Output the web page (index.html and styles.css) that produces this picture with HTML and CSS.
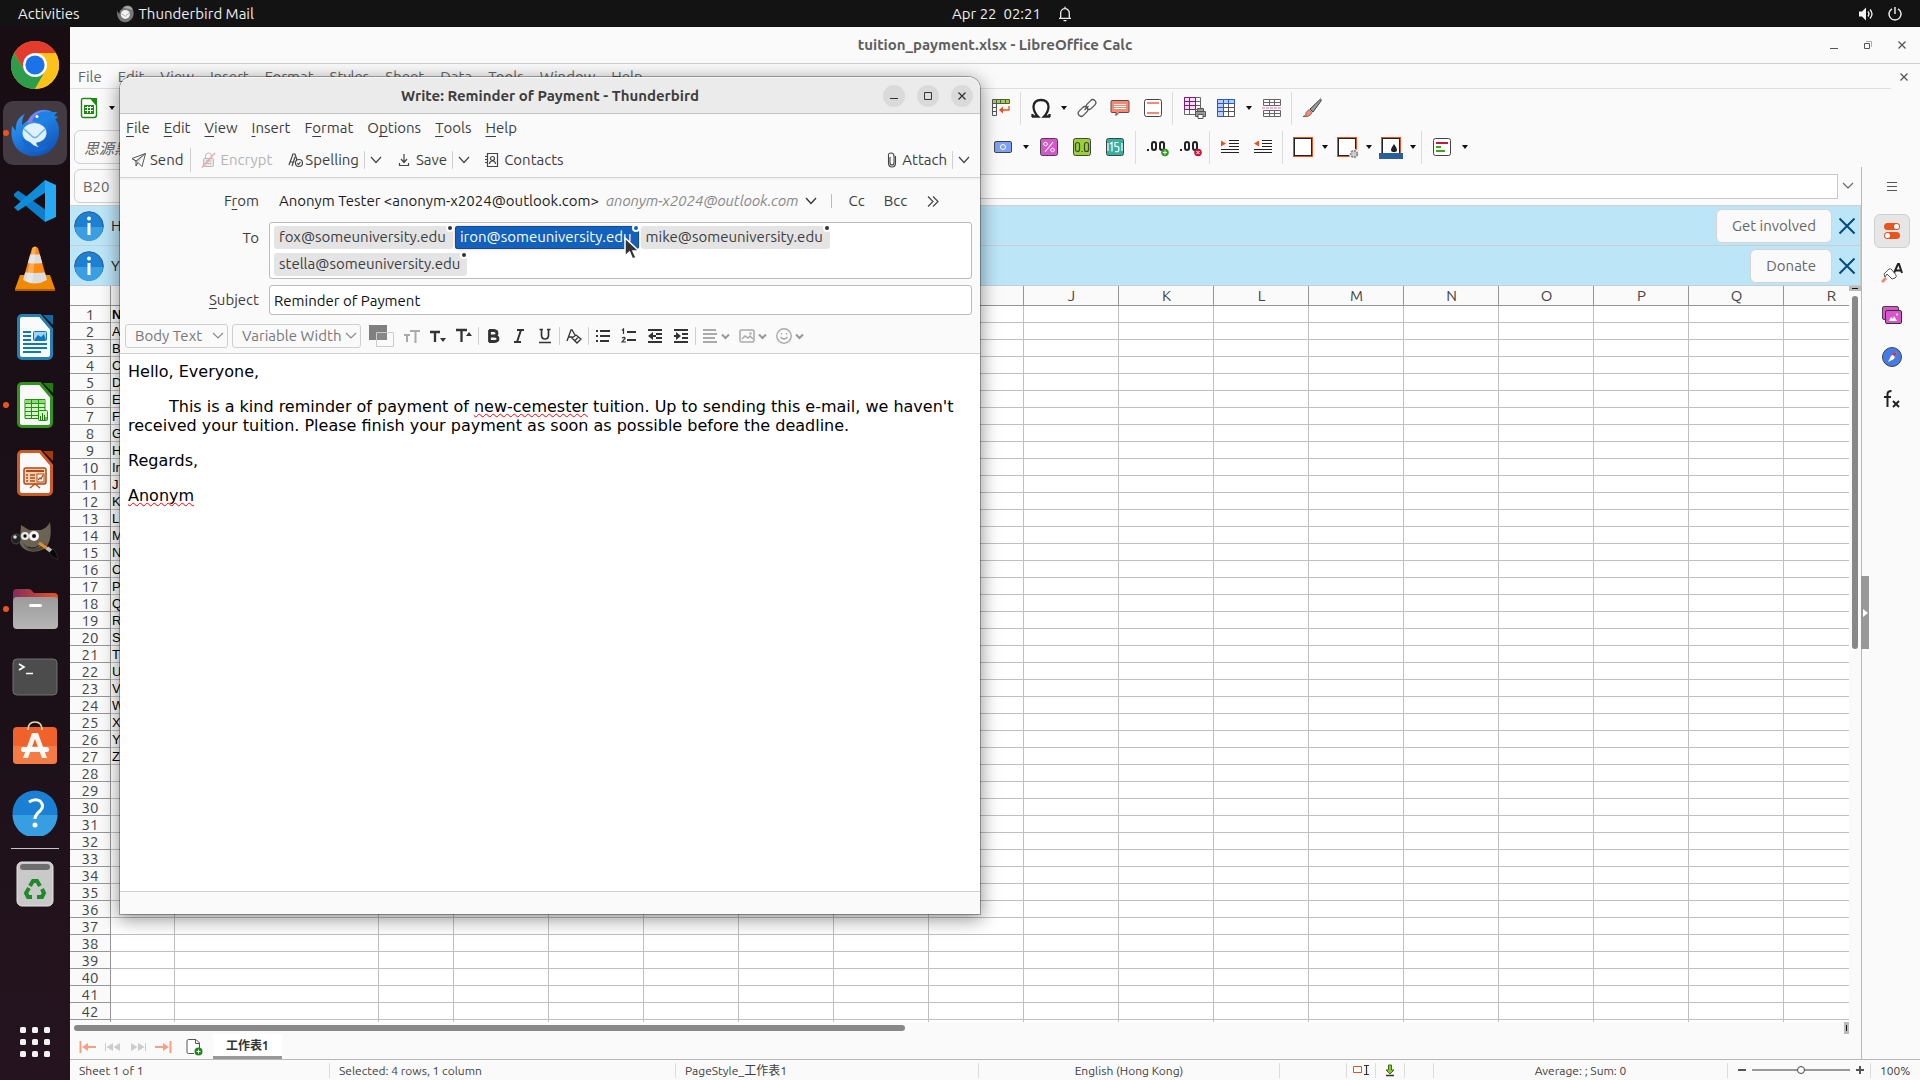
FILE: index.html
```html
<!DOCTYPE html>
<html lang="en">
<head>
<meta charset="utf-8">
<title>Write: Reminder of Payment - Thunderbird</title>
<link rel="stylesheet" href="styles.css">
</head>
<body class="desktop">
<header class="topbar">
  <div class="topbar-left">
    <button class="topbar-item">Activities</button>
    <button class="topbar-item topbar-app">
      <svg width="18" height="18" viewBox="0 0 48 48"><path d="M3 14C1 30 8 46 25 46 40 45 48 32 47 20 46 12 44 7 40 4 32-1 21 1 17 10 10 13 9 20 9 24 5 21 4 17 3 14Z" fill="#777"/><path d="M20 8C28 0 42 2 44 14L34 10Z" fill="#aaa"/><circle cx="25" cy="25" r="12" fill="#f2f2f2"/><path d="M14 23l11 7 10-9" fill="none" stroke="#999" stroke-width="2"/></svg>
      Thunderbird Mail</button>
  </div>
  <button class="topbar-item topbar-clock">Apr 22&nbsp; 02:21
    <svg width="14" height="16" viewBox="0 0 14 16" fill="none" stroke="#eee" stroke-width="1.3"><path d="M1 12.3h12M2.7 12V7a4.3 4.3 0 0 1 8.6 0v5M7 2.7V.8M5.5 14.6h3"/></svg></button>
  <div class="topbar-right">
    <svg width="16" height="14" viewBox="0 0 16 14"><path d="M0 4.500h3L7 .5v13L3 9.500H0z" fill="#f2f2f2"/><path d="M9 4.500q2 2.500 0 5M11 2.500q4 4.500 0 9" fill="none" stroke="#f2f2f2" stroke-width="1.300"/></svg>
    <svg width="14" height="14" viewBox="0 0 14 14" fill="none" stroke="#f2f2f2" stroke-width="1.400"><path d="M4 1.800a6 6 0 1 0 6 0M7 0v7"/></svg>
  </div>
</header>

<main class="screen">
<nav class="dock" aria-label="Dock">
  <button class="dock-item" aria-label="Chrome"><svg width="48" height="48" viewBox="0 0 48 48"><circle cx="24" cy="24" r="24" fill="#fbbc04"/><path d="M24 12h20.800A24 24 0 0 0 3.200 12L13.600 30z" fill="#e33b2e"/><path d="M3.200 12A24 24 0 0 0 24 48l10.400-18L24 24 13.600 30z" fill="#2d9d4b"/><path d="M34.400 30L24 48A24 24 0 0 0 44.800 12H24z" fill="#fcc21b"/><circle cx="24" cy="24" r="12" fill="#fff"/><circle cx="24" cy="24" r="9.600" fill="#1a73e8"/></svg></button>
  <button class="dock-item is-active is-running" aria-label="Thunderbird"><svg width="50" height="48" viewBox="0 0 50 48"><defs><linearGradient id="tb" x1="0" y1="0" x2=".6" y2="1"><stop offset="0" stop-color="#3ea2f5"/><stop offset=".5" stop-color="#1f7fe3"/><stop offset="1" stop-color="#1257b8"/></linearGradient></defs><path d="M2 17C-1 35 9 47 25 47 40 47 49 35 49 22 49 17 48 13 45 10L48 8 44 7 47 3 42 3C36-1 24 0 18 11 16 13 14 14 12 16 12 11 13 7 15 5 8 8 5 15 6 22z" fill="url(#tb)"/><path d="M17 14C22 3 32-1 42 3 33 3 29 8 26 14 22 13 20 14 17 14z" fill="#8c7cf0"/><path d="M22 12C26 3 34 1 42 3L47 3 44 7 48 8 44 11C38 7 31 8 28 14z" fill="#1f80e6"/><circle cx="27" cy="7.500" r="1.500" fill="#fff"/><path d="M12 30q4 11 15 13 9-1 12-8-6 5-14 3z" fill="#1568cf"/><ellipse cx="24.500" cy="24" rx="12" ry="10" fill="#dff0ff"/><path d="M19 31q3 6 10 7-3-2-3-5z" fill="#dff0ff"/><path d="M14 20l9 8q2 1 4 0l8-8" fill="none" stroke="#6fb3ef" stroke-width="1.500"/></svg></button>
  <button class="dock-item" aria-label="Code"><svg width="42" height="42" viewBox="0 0 42 42"><path d="M4 10.500L0 14v2l31 26 1-12z" fill="#0d7fca"/><path d="M4 31L0 27.500 31 0l1 12z" fill="#108cd8"/><path d="M31 0l11 5v32l-11 5z" fill="#27a9f3"/></svg></button>
  <button class="dock-item" aria-label="VLC"><svg width="40" height="46" viewBox="0 0 40 46"><defs><clipPath id="cone"><path d="M17 2q3-3 6 0l9 32q-12 7-24 0z"/></clipPath></defs><path d="M5 29h30l5 14v2H0v-2z" fill="#f08a00"/><path d="M0 43h40v2H0z" fill="#b95b00"/><g clip-path="url(#cone)"><path d="M0 0h40v40H0z" fill="#ff8a12"/><path d="M0 6q20 5 40 0v9q-20 5-40 0zM0 25q20 4 40 0v16H0z" fill="#dcdcdc"/><path d="M18 0h3l-4 40h-7z" fill="#fff" opacity=".3"/></g></svg></button>
  <button class="dock-item" aria-label="Writer"><svg width="36" height="46" viewBox="0 0 36 46"><path d="M5 1.500h18L34.500 15v26a3.500 3.500 0 0 1-3.500 3.500H5A3.500 3.500 0 0 1 1.500 41V5A3.500 3.500 0 0 1 5 1.500z" fill="#fafafa" stroke="#2181b7" stroke-width="3"/><path d="M26 1h10v10z" fill="#116ba0"/><path d="M6 18h8M6 22h8M6 26h8M6 30h24M6 34h24M6 38h18" stroke="#1177bd" stroke-width="2"/><rect x="16.500" y="17.500" width="13" height="9" rx="1" fill="#9bd3f3" stroke="#1177bd"/><path d="M17 26l4-5 3 2 3-3 2 6z" fill="#1177bd"/></svg></button>
  <button class="dock-item is-running" aria-label="Calc"><svg width="36" height="46" viewBox="0 0 36 46"><path d="M5 1.500h18L34.500 15v26a3.500 3.500 0 0 1-3.500 3.500H5A3.500 3.500 0 0 1 1.500 41V5A3.500 3.500 0 0 1 5 1.500z" fill="#fafafa" stroke="#2f961b" stroke-width="3"/><path d="M26 1h10v10z" fill="#1f7d0f"/><path d="M8 17.500h20v19H8z" fill="#d0f4c2" stroke="#278e15"/><path d="M8 18h20v3H8z" fill="#8bdc71"/><path d="M8 21.500h20M8 25.500h20M8 29.500h20M8 33.500h20M14.500 17v19M21.500 17v19" stroke="#278e15"/><rect x="21.500" y="28.500" width="9" height="10" rx="1" fill="#d0f4c2" stroke="#278e15"/><path d="M23.500 38v-4M25.500 38v-7M27.500 38v-5M29 38v-3" stroke="#1f7d0f"/></svg></button>
  <button class="dock-item" aria-label="Impress"><svg width="36" height="46" viewBox="0 0 36 46"><path d="M5 1.500h18L34.500 15v26a3.500 3.500 0 0 1-3.500 3.500H5A3.500 3.500 0 0 1 1.500 41V5A3.500 3.500 0 0 1 5 1.500z" fill="#fafafa" stroke="#cf5a23" stroke-width="3"/><path d="M26 1h10v10z" fill="#a33c09"/><rect x="7" y="18" width="22" height="16" rx="2" fill="#f9d0b6" stroke="#b04a14" stroke-width="1.500"/><path d="M9 21h18" stroke="#b04a14" stroke-width="2"/><path d="M9 25h2M9 28h2M9 31h2M13 25h5M13 28h5M13 31h5" stroke="#b04a14" stroke-width="1.500"/><rect x="20" y="24" width="7" height="8" fill="#fff" stroke="#b04a14"/><path d="M21 30l2-2 1 1 2-4M18 34l-5 4M18 34l5 4" fill="none" stroke="#b04a14" stroke-width="1.300"/></svg></button>
  <button class="dock-item" aria-label="GIMP"><svg width="48" height="40" viewBox="0 0 48 40"><path d="M10 4l8 5h12Q37 6 39 1q3 20-6 27-10 5-18 1-8-4-6-12z" fill="#6b6455"/><path d="M12 22q10 10 24 0-5 9-14 8-7-1-10-8z" fill="#4c463b"/><circle cx="5" cy="18" r="5" fill="#222" stroke="#777" stroke-width=".5"/><circle cx="4" cy="16" r="1.800" fill="#ddd"/><circle cx="14" cy="15" r="4" fill="#e8e8e8"/><circle cx="23" cy="15" r="5" fill="#f5f5f5"/><circle cx="14" cy="15" r="1.700" fill="#111"/><circle cx="23" cy="15" r="2" fill="#111"/><path d="M17 26q8 3 13-4" stroke="#222" fill="none"/><path d="M28 22l9 6" stroke="#e09030" stroke-width="3"/><path d="M36 27l4 3" stroke="#bbb" stroke-width="4"/><path d="M38 32l4-4q4 3 5 11-5-2-9-7z" fill="#080808" stroke="#444" stroke-width=".5"/></svg></button>
  <button class="dock-item is-running" aria-label="Files"><svg width="46" height="42" viewBox="0 0 46 42"><defs><linearGradient id="fo"><stop offset="0" stop-color="#862c5c"/><stop offset="1" stop-color="#e95420"/></linearGradient><linearGradient id="fg" x1="0" y1="0" x2="0" y2="1"><stop offset="0" stop-color="#9b9b9b"/><stop offset="1" stop-color="#b6b6b6"/></linearGradient></defs><path d="M1 20V5q0-4 4-4h12q2 0 4 3l1 1h20q4 0 4 4v11z" fill="url(#fo)"/><rect x="1" y="9" width="45" height="32" rx="4" fill="url(#fg)"/><rect x="17" y="16" width="13" height="3" rx="1.500" fill="#fff"/></svg></button>
  <button class="dock-item" aria-label="Terminal"><svg width="46" height="38" viewBox="0 0 46 38"><rect x="1" y="1" width="44" height="36" rx="4" fill="#4c4c4c" stroke="#707070"/><path d="M7 6l5 3-5 3M14 15.500h7" fill="none" stroke="#fff" stroke-width="1.600"/></svg></button>
  <button class="dock-item" aria-label="Software"><svg width="46" height="52" viewBox="0 0 46 52"><rect x="1" y="8" width="44" height="37" rx="4" fill="#f0622b"/><path d="M1 27h44v14q0 4-4 4H5q-4 0-4-4z" fill="#f57b45"/><path d="M16 11q0-8 7-8t7 8" fill="none" stroke="#efd9ad" stroke-width="1.600"/><path d="M20 14h6l9 25h-5L23 20l-7 19h-5z" fill="#fff" opacity=".93"/><rect x="9" y="28" width="28" height="5" rx="2.500" fill="#fff"/></svg></button>
  <button class="dock-item" aria-label="Help"><svg width="46" height="46" viewBox="0 0 46 46"><circle cx="23" cy="23" r="22.500" fill="#1b80d4"/><path d="M.5 25h45a22.500 22.500 0 0 1-45 0z" fill="#389ee2"/><path d="M17 12q6-4 11-1 5 5 0 10-5 4-5 8" fill="none" stroke="#fff" stroke-width="3"/><circle cx="23" cy="35" r="2.500" fill="#fff"/></svg></button>
  <div class="dock-separator"></div>
  <button class="dock-item" aria-label="Trash"><svg width="38" height="46" viewBox="0 0 38 46"><rect x="1" y="1" width="36" height="44" rx="5" fill="#c9c9c9" stroke="#e4e4e4"/><rect x="4" y="3" width="30" height="6" rx="3" fill="#6e6e6e"/><g fill="none" stroke="#1f8a2b" stroke-width="4"><path d="M14 25l3-5h4l3 5M26 28l2 4-2 4h-5M16 36h-4l-2-4 3-5"/></g></svg></button>
  <button class="dock-item dock-apps" aria-label="Show applications"><svg width="32" height="32" viewBox="0 0 32 32" fill="#f2f2f2"><rect x="1" y="1" width="6" height="6" rx="1.500"/><rect x="13" y="1" width="6" height="6" rx="1.500"/><rect x="25" y="1" width="6" height="6" rx="1.500"/><rect x="1" y="13" width="6" height="6" rx="1.500"/><rect x="13" y="13" width="6" height="6" rx="1.500"/><rect x="25" y="13" width="6" height="6" rx="1.500"/><rect x="1" y="25" width="6" height="6" rx="1.500"/><rect x="13" y="25" width="6" height="6" rx="1.500"/><rect x="25" y="25" width="6" height="6" rx="1.500"/></svg></button>
</nav>

<section class="calc">
  <header class="calc-title">
    <h1 class="calc-title-text">tuition_payment.xlsx - LibreOffice Calc</h1>
    <div class="calc-controls">
      <button class="calc-control" aria-label="Minimize"><svg width="10" height="10" viewBox="0 0 10 10"><path d="M1 8.500h8" stroke="#555"/></svg></button>
      <button class="calc-control" aria-label="Restore"><svg width="10" height="10" viewBox="0 0 10 10" fill="none"><path d="M1.500 3.500h5v5h-5z" stroke="#555"/><path d="M3 1.500h5.500V7" stroke="#aaa"/></svg></button>
      <button class="calc-control" aria-label="Close"><svg width="10" height="10" viewBox="0 0 10 10"><path d="M1.500 1.500l7 7m0-7l-7 7" stroke="#555" stroke-width="1.300"/></svg></button>
    </div>
  </header>
  <nav class="calc-menu">
    <div class="calc-menu-list">
      <button>File</button><button>Edit</button><button>View</button><button>Insert</button><button>Format</button><button>Styles</button><button>Sheet</button><button>Data</button><button>Tools</button><button>Window</button><button>Help</button>
    </div>
    <button class="doc-close" aria-label="Close document"><svg width="10" height="10" viewBox="0 0 10 10"><path d="M1.500 1.500l7 7m0-7l-7 7" stroke="#555" stroke-width="1.300"/></svg></button>
  </nav>
  <div class="toolbar toolbar-standard">
    <div class="tool-lead">
      <button class="tool" aria-label="New"><svg width="18" height="22" viewBox="0 0 18 22"><path d="M3 1.500h8L16.500 8v10q0 2.500-2.500 2.500H3.500q-2 0-2-2V3.500q0-2 1.500-2z" fill="#fff" stroke="#1c8a10" stroke-width="1.400"/><path d="M10 1h7v8z" fill="#1c8a10"/><path d="M4 8h10v9H4z" fill="#1c8a10"/><path d="M5 10.500h8M5 13.500h8M7.500 9v7M10.500 9v7" stroke="#fff"/></svg></button><button class="drop" aria-label="New options"></button>
    </div>
    <button class="tool" aria-label="Pivot table"><svg width="20" height="20" viewBox="0 0 20 20" fill="none"><path d="M1.500 1.500h17v4h-17z" fill="#a1d340" stroke="#555"/><path d="M1.500 5.500h4v12h-4zM1.500 9.500h4M1.500 13.500h4M5.500 1v4M9.500 1v4M14.500 1v4" stroke="#555"/><path d="M18 8v4h-7" stroke="#e8531e" stroke-width="1.300"/><path d="M12 8.500v7l-4-3.500z" fill="#e8531e"/></svg></button>
    <i class="tool-sep"></i>
    <button class="tool" aria-label="Special character"><svg width="20" height="20" viewBox="0 0 20 20"><path d="M1 18.500h6Q2.500 14 2.500 8.500 3 2 10 2t7.500 6.500Q17.500 14 13 18.500h6M1.500 19v-3M18.500 19v-3" fill="none" stroke="#222" stroke-width="2.300"/></svg></button><button class="drop" aria-label="More characters"></button>
    <button class="tool" aria-label="Hyperlink"><svg width="20" height="20" viewBox="0 0 20 20" fill="none" stroke="#555" stroke-width="1.300"><rect x="8.500" y="3.500" width="11" height="6" rx="3" transform="rotate(-45 14 6.500)"/><rect x=".5" y="10.500" width="11" height="6" rx="3" transform="rotate(-45 6 13.500)"/><path d="M7.500 12l4-4"/></svg></button>
    <button class="tool" aria-label="Comment"><svg width="20" height="20" viewBox="0 0 20 20"><path d="M2 2.500h16q1 0 1 1v10q0 1-1 1H9l-3 3v-3H2q-1 0-1-1v-10q0-1 1-1z" fill="#f78872" stroke="#5a4a48"/><path d="M4 6.500h12M4 8.500h12M4 10.500h12" stroke="#fff"/></svg></button>
    <button class="tool" aria-label="Headers and footers"><svg width="20" height="20" viewBox="0 0 20 20"><rect x="1.500" y="1.500" width="17" height="17" rx="2" fill="#fff" stroke="#444"/><path d="M4 5h12M4 15h12" stroke="#f78872" stroke-width="2"/></svg></button>
    <i class="tool-sep"></i>
    <button class="tool" aria-label="Print range"><svg width="26" height="24" viewBox="0 0 26 24" fill="none"><path d="M4.500 1.500h16v17h-16zM9.500 1v17M15.500 1v17M4 5.500h17M4 9.500h17M4 13.500h17" stroke="#666"/><path d="M4.500 1.500h11v12h-11z" fill="#f4dcf3" stroke="#7c1c74"/><path d="M9.500 1v12M4 5.500h11M4 9.500h11" stroke="#7c1c74"/><path d="M17.500 12.500h6v3h-6zM15.500 15.500h10v5h-10z" fill="#999" stroke="#555"/><path d="M18 18.500h5v4h-5z" fill="#fff" stroke="#555"/></svg></button>
    <button class="tool" aria-label="Freeze"><svg width="20" height="20" viewBox="0 0 20 20" fill="none"><path d="M1.500 1.500h17v17h-17z" fill="#fff" stroke="#555"/><path d="M1.500 1.500h17v4h-17zM1.500 5.500h6v13h-6z" fill="#b9cdf8" stroke="#2459cf"/><path d="M7.500 9.500h11M7.500 13.500h11M12.500 6v12" stroke="#555"/><path d="M1.500 9.500h6M1.500 13.500h6M7.500 1v18M12.500 1v4" stroke="#2459cf"/></svg></button><button class="drop" aria-label="Freeze options"></button>
    <button class="tool" aria-label="Split"><svg width="22" height="20" viewBox="0 0 22 20" fill="none"><path d="M2.500 1.500h17v6h-17zM2.500 12.500h17v6h-17zM2 4.500h17M2 15.500h17M8.500 1v7M13.500 1v7M8.500 12v7M13.500 12v7" stroke="#666"/><path d="M1 10h20" stroke="#e66bc0" stroke-dasharray="3 1"/></svg></button>
    <i class="tool-sep"></i>
    <button class="tool" aria-label="Draw"><svg width="20" height="20" viewBox="0 0 20 20"><path d="M18.500 1q1 0 .5 2l-8 11-3-3z" fill="#999" stroke="#444"/><path d="M7 11.500l3 3q-2 5-9 4 4-1 3-4z" fill="#f78872" stroke="#555" stroke-width=".8"/></svg></button>
  </div>
  <div class="toolbar toolbar-format">
    <div class="tool-lead tool-lead--font"><input class="font-name" aria-label="Font name" value="思源黑"></div>
    <button class="tool" aria-label="Currency"><svg width="20" height="20" viewBox="0 0 20 20"><rect x="1.500" y="4.500" width="17" height="11" rx="1.500" fill="#7da2f4" stroke="#444"/><circle cx="10" cy="10" r="2.500" fill="none" stroke="#fff"/></svg></button><button class="drop" aria-label="Currency options"></button>
    <button class="tool" aria-label="Percent"><svg width="20" height="20" viewBox="0 0 20 20"><rect x="1.500" y="1.500" width="17" height="17" rx="2" fill="#d955cb" stroke="#444"/><path d="M14 5L6 15" stroke="#fff" stroke-width="1.200"/><circle cx="6.500" cy="7" r="1.800" fill="none" stroke="#fff"/><circle cx="13.500" cy="13" r="1.800" fill="none" stroke="#fff"/></svg></button>
    <button class="tool" aria-label="Number"><svg width="20" height="20" viewBox="0 0 20 20"><rect x="1.500" y="1.500" width="17" height="17" rx="2" fill="#9bcf3c" stroke="#444"/><g fill="none" stroke="#3b4a1c" stroke-width="1.200"><rect x="3.500" y="5.500" width="4" height="9" rx="2"/><rect x="12.500" y="5.500" width="4" height="9" rx="2"/><path d="M9.500 14.500h1.200"/></g></svg></button>
    <button class="tool" aria-label="Date"><svg width="20" height="20" viewBox="0 0 20 20"><rect x="1.500" y="1.500" width="17" height="17" rx="2" fill="#37b0a0" stroke="#444"/><path d="M3 6v8M17 6v8M5 7l2-1.500v9M13.500 5.500H10v4q4-1 4 2.500t-4 2.500" fill="none" stroke="#fff" stroke-width="1.200"/></svg></button>
    <i class="tool-sep tool-sep--wide"></i>
    <button class="tool" aria-label="Add decimal"><svg width="24" height="20" viewBox="0 0 24 20"><g fill="none" stroke="#222" stroke-width="2"><path d="M3 14v-2"/><rect x="7" y="5" width="4" height="8" rx="2"/><rect x="15" y="5" width="4" height="8" rx="2"/></g><circle cx="20" cy="15.500" r="3.800" fill="#329b20"/><path d="M18 15.500h4m-2-2v4" stroke="#fff"/></svg></button>
    <button class="tool" aria-label="Delete decimal"><svg width="24" height="20" viewBox="0 0 24 20"><g fill="none" stroke="#222" stroke-width="2"><path d="M3 14v-2"/><rect x="7" y="5" width="4" height="8" rx="2"/><rect x="15" y="5" width="4" height="8" rx="2"/></g><circle cx="20" cy="15.500" r="3.800" fill="#c41938"/><path d="M18.500 14l3 3m0-3l-3 3" stroke="#fff"/></svg></button>
    <i class="tool-sep"></i>
    <button class="tool" aria-label="Increase indent"><svg width="20" height="20" viewBox="0 0 20 20"><path d="M9 3.500h10M9 6.500h10M9 9.500h10M1 12.500h18M1 15.500h18" stroke="#222"/><path d="M1 3.500v6l5-3z" fill="#e8531e"/></svg></button>
    <button class="tool" aria-label="Decrease indent"><svg width="20" height="20" viewBox="0 0 20 20"><path d="M9 3.500h10M9 6.500h10M9 9.500h10M1 12.500h18M1 15.500h18" stroke="#222"/><path d="M6 3.500v6l-5-3z" fill="#e8531e"/></svg></button>
    <i class="tool-sep"></i>
    <button class="tool" aria-label="Borders"><svg width="20" height="20" viewBox="0 0 20 20"><rect x=".5" y=".5" width="19" height="19" fill="#fff" stroke="#e8531e"/><rect x="1.500" y="1.500" width="17" height="17" fill="#fff" stroke="#222"/></svg></button><button class="drop drop--tight" aria-label="Border options"></button>
    <button class="tool" aria-label="Border style"><svg width="24" height="24" viewBox="0 0 24 24"><rect x="2.500" y="2.500" width="19" height="19" fill="#fff" stroke="#e8531e"/><rect x="3.500" y="3.500" width="17" height="17" fill="#fff" stroke="#222"/><circle cx="19" cy="19" r="5" fill="#fafafa"/><circle cx="19" cy="19" r="3.300" fill="#ccc" stroke="#888" stroke-width="1.800" stroke-dasharray="2 1"/></svg></button><button class="drop drop--tight" aria-label="Style options"></button>
    <button class="tool" aria-label="Border color"><svg width="24" height="24" viewBox="0 0 24 24"><rect x="2.500" y="2.500" width="19" height="19" fill="#fff" stroke="#e8531e"/><rect x="3.500" y="3.500" width="17" height="17" fill="#fff" stroke="#222"/><path d="M15 9q6 8 0 8t0-8z" fill="#222"/><path d="M0 18h24v6H0z" fill="#2a6099"/></svg></button><button class="drop drop--tight" aria-label="Color options"></button>
    <i class="tool-sep"></i>
    <button class="tool" aria-label="Conditional formatting"><svg width="20" height="20" viewBox="0 0 20 20"><rect x="1.500" y="1.500" width="17" height="17" rx="2" fill="#fff" stroke="#444"/><path d="M4 6h12" stroke="#c41938" stroke-width="2"/><path d="M4 10h5M4 14h9" stroke="#3ba51f" stroke-width="2"/></svg></button><button class="drop" aria-label="Conditional options"></button>
  </div>

  <div class="work">
    <div class="work-main">
      <div class="formula">
        <input class="name-box" aria-label="Name box" value="B20">
        <input class="formula-input" aria-label="Formula">
        <button class="formula-expand" aria-label="Expand formula bar"><svg width="12" height="8" viewBox="0 0 12 8"><path d="M1 1l5 5 5-5" fill="none" stroke="#666" stroke-width="1.200"/></svg></button>
      </div>
      <div class="infobar">
        <svg class="info-icon" width="30" height="30" viewBox="0 0 30 30"><circle cx="15" cy="15" r="14.300" fill="#1f7fd0" stroke="#2a5d86"/><path d="M1 16h28a14 14 0 0 1-28 0z" fill="#3a9fe0"/><circle cx="15" cy="7.500" r="2" fill="#fff"/><path d="M15 12v12" stroke="#fff" stroke-width="3"/></svg>
        <span class="infobar-text">H</span>
        <button class="infobar-button">Get involved</button>
        <button class="infobar-close" aria-label="Dismiss"><svg width="18" height="18" viewBox="0 0 18 18"><path d="M1.500 1.500l15 15m0-15l-15 15" stroke="#084a80" stroke-width="2"/></svg></button>
      </div>
      <div class="infobar">
        <svg class="info-icon" width="30" height="30" viewBox="0 0 30 30"><circle cx="15" cy="15" r="14.300" fill="#1f7fd0" stroke="#2a5d86"/><path d="M1 16h28a14 14 0 0 1-28 0z" fill="#3a9fe0"/><circle cx="15" cy="7.500" r="2" fill="#fff"/><path d="M15 12v12" stroke="#fff" stroke-width="3"/></svg>
        <span class="infobar-text">Y</span>
        <button class="infobar-button">Donate</button>
        <button class="infobar-close" aria-label="Dismiss"><svg width="18" height="18" viewBox="0 0 18 18"><path d="M1.500 1.500l15 15m0-15l-15 15" stroke="#084a80" stroke-width="2"/></svg></button>
      </div>
      <div class="sheet-area">
        <div class="sheet-view">
          <table class="sheet">
            <colgroup id="cols"></colgroup>
            <thead><tr id="head"></tr></thead>
            <tbody id="rows"></tbody>
          </table>
        </div>
        <div class="vscroll"><div class="vsplit"></div><div class="vthumb"></div></div>
      </div>
      <div class="hscroll"><div class="hthumb"></div><div class="hsplit"></div></div>
      <div class="tabs">
        <button class="tab-nav" aria-label="First sheet"><svg width="18" height="14" viewBox="0 0 18 14"><path d="M1.500 1v12M5 7h12" stroke="#f79f83" stroke-width="2"/><path d="M9 3v8L3 7z" fill="#f79f83"/></svg></button>
        <button class="tab-nav" aria-label="Previous sheet"><svg width="18" height="14" viewBox="0 0 18 14" fill="#ccc"><path d="M1 3h1v8H1zM9 3v8L2.500 7zM16 3v8L9.500 7z"/></svg></button>
        <button class="tab-nav" aria-label="Next sheet"><svg width="18" height="14" viewBox="0 0 18 14" fill="#ccc"><path d="M16 3h1v8h-1zM9 3v8l6.500-4zM2 3v8l6.500-4z"/></svg></button>
        <button class="tab-nav" aria-label="Last sheet"><svg width="18" height="14" viewBox="0 0 18 14"><path d="M16.500 1v12M1 7h12" stroke="#f79f83" stroke-width="2"/><path d="M9 3v8l6-4z" fill="#f79f83"/></svg></button>
        <button class="tab-add" aria-label="Add sheet"><svg width="18" height="18" viewBox="0 0 18 18"><path d="M9 15.500H3.500q-1.500 0-1.500-1.500V3q0-1.500 1.500-1.500H11L14.500 5v5" fill="#fff" stroke="#555"/><path d="M10.500 1.500v4h4" fill="none" stroke="#555"/><circle cx="13.500" cy="13.500" r="4" fill="#1b8a1b"/><path d="M11.500 13.500h4m-2-2v4" stroke="#fff"/></svg></button>
        <button class="sheet-tab">工作表1</button>
      </div>
    </div>
    <aside class="sidebar">
      <button class="side-handle" aria-label="Hide sidebar"><svg width="5" height="8" viewBox="0 0 5 8"><path d="M0 0l5 4-5 4z" fill="#fff"/></svg></button>
      <button class="side-item side-menu" aria-label="Sidebar settings"><svg width="12" height="12" viewBox="0 0 12 12"><path d="M1 1.500h10M1 5.500h10M1 9.500h10" stroke="#555"/></svg></button>
      <button class="side-item side-item--on" aria-label="Properties"><svg width="18" height="18" viewBox="0 0 18 18"><rect x="1" y="1" width="16" height="7" rx="3.500" fill="#e95420"/><rect x="1" y="10" width="16" height="7" rx="3.500" fill="#e95420"/><circle cx="13.500" cy="4.500" r="2.500" fill="#fff"/><circle cx="4.500" cy="13.500" r="2.500" fill="#fff"/></svg></button>
      <button class="side-item" aria-label="Styles"><svg width="22" height="22" viewBox="0 0 22 22" fill="none"><path d="M13 11l4-9h1l3 9M14 8.500h6" stroke="#222" stroke-width="2"/><path d="M3 12l5-5q2-1 3 1l4 5q1 2-1 3l-3 1-5-5-2 3z" fill="#fff" stroke="#555"/><path d="M1 20l4-4" stroke="#f78872" stroke-width="3"/></svg></button>
      <button class="side-item" aria-label="Gallery"><svg width="20" height="20" viewBox="0 0 20 20"><rect x=".5" y="1.500" width="16" height="13" rx="1.500" fill="#d955cb" stroke="#444"/><rect x="3.500" y="5.500" width="16" height="13" rx="1.500" fill="#d955cb" stroke="#333"/><path d="M7 16l2-4 2 2 1-3 3 5z" fill="#fff"/><circle cx="15" cy="9.500" r="1" fill="#fff"/></svg></button>
      <button class="side-item" aria-label="Navigator"><svg width="20" height="20" viewBox="0 0 20 20"><circle cx="10" cy="10" r="9.500" fill="#467be6" stroke="#444"/><path d="M15 5l-3 7-6 3 3-6z" fill="#fff"/><path d="M15 5l-2 5-3-3z" fill="#dc2b3c"/></svg></button>
      <button class="side-item" aria-label="Functions"><svg width="18" height="20" viewBox="0 0 18 20" fill="none" stroke="#222" stroke-width="2"><path d="M4.500 18V5q0-3 4-3M1 8h7M10 12l6 6m0-6l-6 6"/></svg></button>
    </aside>
  </div>

  <footer class="status">
    <span>Sheet 1 of 1</span>
    <span>Selected: 4 rows, 1 column</span>
    <span>PageStyle_工作表1</span>
    <span class="status-mid">English (Hong Kong)</span>
    <span></span>
    <span class="status-icon"><svg width="18" height="12" viewBox="0 0 18 12" fill="none"><path d="M1.500 2.500h8v6h-8z" stroke="#e8531e"/><path d="M12 1.500h5M12 10.500h5M14.500 1v10" stroke="#333" stroke-width="1.200"/></svg></span>
    <span class="status-icon"><svg width="12" height="13" viewBox="0 0 12 13"><path d="M4.500 1h3v5H10l-4 4-4-4h2.500z" fill="#8dc63f" stroke="#3c6b12"/><path d="M2 11.500h8" stroke="#333" stroke-width="1.500"/></svg></span>
    <span></span>
    <span class="status-mid">Average: ; Sum: 0</span>
    <div class="zoom-control">
      <button aria-label="Zoom out"><svg width="8" height="8" viewBox="0 0 8 8"><path d="M0 4h8" stroke="#555" stroke-width="2"/></svg></button>
      <input type="range" class="zoom-range" aria-label="Zoom">
      <button aria-label="Zoom in"><svg width="8" height="8" viewBox="0 0 8 8"><path d="M0 4h8M4 0v8" stroke="#555" stroke-width="2"/></svg></button>
    </div>
    <span class="status-zoom">100%</span>
  </footer>
</section>

<section class="compose" aria-label="Write: Reminder of Payment">
  <header class="compose-title">
    <h2 class="compose-title-text">Write: Reminder of Payment - Thunderbird</h2>
    <div class="compose-controls">
      <button aria-label="Minimize"><svg width="10" height="10" viewBox="0 0 10 10"><path d="M1 7.500h8" stroke="#333"/></svg></button>
      <button aria-label="Maximize"><svg width="10" height="10" viewBox="0 0 10 10"><path d="M1.500 1.500h7v7h-7z" fill="none" stroke="#333"/></svg></button>
      <button aria-label="Close"><svg width="10" height="10" viewBox="0 0 10 10"><path d="M1.500 1.500l7 7m0-7l-7 7" stroke="#333" stroke-width="1.300"/></svg></button>
    </div>
  </header>
  <nav class="compose-menu">
    <button><u>F</u>ile</button><button><u>E</u>dit</button><button><u>V</u>iew</button><button><u>I</u>nsert</button><button>F<u>o</u>rmat</button><button>O<u>p</u>tions</button><button><u>T</u>ools</button><button><u>H</u>elp</button>
  </nav>
  <div class="compose-tools">
    <button class="ctool ctool-send"><svg width="16" height="16" viewBox="0 0 16 16" fill="none" stroke="#555"><path d="M1 6.500L14.500 1.500 11 14.500 7 10.500z"/><path d="M14.500 1.500L5 9v5l2-3.500M5 9L1 6.500" fill="#ccc"/></svg>Send</button>
    <i class="bar-sep"></i>
    <button class="ctool ctool-encrypt" disabled><svg width="16" height="16" viewBox="0 0 16 16" fill="none" stroke="#bbb"><rect x="2.500" y="6.500" width="10" height="8" rx="1" fill="#e8e8e8"/><path d="M4.500 6.500V4q0-3 3-3t3 3v2.500M5 9h5M5 11.500h5"/><path d="M1 15.500L14 1" stroke="#f2a0aa" stroke-width="1.300"/></svg>Encrypt</button>
    <button class="ctool ctool-spell"><svg width="16" height="16" viewBox="0 0 16 16" fill="none" stroke="#444" stroke-width="1.200"><path d="M1 13L5 2h2l2 6M2.500 10h4M4 14l3-9"/><circle cx="11" cy="11" r="3.500"/><path d="M9.500 11l1 1.500 2-2.500"/></svg>Spelling</button>
    <i class="bar-sep bar-sep--short"></i>
    <button class="chev" aria-label="Spelling options"><svg width="12" height="8" viewBox="0 0 12 8"><path d="M1 1l5 5.500L11 1" fill="none" stroke="#444" stroke-width="1.200"/></svg></button>
    <button class="ctool ctool-save"><svg width="12" height="14" viewBox="0 0 12 14" fill="none" stroke="#444" stroke-width="1.200"><path d="M6 1v8M3 6l3 3.500L9 6M1.500 10v2.500h9V10"/></svg>Save</button>
    <i class="bar-sep bar-sep--short"></i>
    <button class="chev" aria-label="Save options"><svg width="12" height="8" viewBox="0 0 12 8"><path d="M1 1l5 5.500L11 1" fill="none" stroke="#444" stroke-width="1.200"/></svg></button>
    <button class="ctool ctool-contacts"><svg width="14" height="16" viewBox="0 0 14 16" fill="none" stroke="#444" stroke-width="1.200"><path d="M2.500 1.500h10v13h-10zM0 4.500h2M0 7.500h2M0 10.500h2"/><circle cx="7.500" cy="6.500" r="2"/><path d="M4.500 12q0-3 3-3t3 3"/></svg>Contacts</button>
    <span class="grow"></span>
    <button class="ctool ctool-attach"><svg width="10" height="16" viewBox="0 0 10 16" fill="none" stroke="#444" stroke-width="1.100"><path d="M3 5v6q0 2 2 2t2-2V4q0-3-3-3T1.500 4v7q0 4 3.500 4t3.500-4V4"/></svg>Attach</button>
    <i class="bar-sep bar-sep--short"></i>
    <button class="chev" aria-label="Attach options"><svg width="12" height="8" viewBox="0 0 12 8"><path d="M1 1l5 5.500L11 1" fill="none" stroke="#444" stroke-width="1.200"/></svg></button>
  </div>
  <div class="headers">
    <div class="from-row">
      <label class="field-label" for="from">F<u>r</u>om</label>
      <button id="from" class="from-value">Anonym Tester &lt;anonym-x2024@outlook.com&gt;<em>anonym-x2024@outlook.com</em><svg width="12" height="8" viewBox="0 0 12 8"><path d="M1 1l5 5.500L11 1" fill="none" stroke="#333" stroke-width="1.300"/></svg></button>
      <i class="bar-sep bar-sep--tiny"></i>
      <button class="cc">Cc</button><button class="bcc">Bcc</button>
      <button class="more" aria-label="More fields"><svg width="12" height="11" viewBox="0 0 12 11"><path d="M1 .5l5 5-5 5M6 .5l5 5-5 5" fill="none" stroke="#444" stroke-width="1.200"/></svg></button>
    </div>
    <div class="to-row">
      <label class="field-label" for="to">To</label>
      <div class="to-field">
        <span class="pill">fox@someuniversity.edu</span>
        <span class="pill pill--on">iron@someuniversity.edu</span>
        <span class="pill">mike@someuniversity.edu</span>
        <span class="pill">stella@someuniversity.edu</span>
        <input id="to" class="to-input" type="text">
      </div>
    </div>
    <div class="subject-row">
      <label class="field-label" for="subject"><u>S</u>ubject</label>
      <input id="subject" class="subject-input" value="Reminder of Payment">
    </div>
  </div>
  <div class="format">
    <div class="pick pick--style"><select aria-label="Paragraph style"><option>Body Text</option></select><svg width="12" height="8" viewBox="0 0 12 8"><path d="M1 1l5 5 5-5" fill="none" stroke="#888" stroke-width="1.200"/></svg></div>
    <div class="pick pick--font"><select aria-label="Font"><option>Variable Width</option></select><svg width="12" height="8" viewBox="0 0 12 8"><path d="M1 1l5 5 5-5" fill="none" stroke="#888" stroke-width="1.200"/></svg></div>
    <button class="swatch" aria-label="Text color"><svg width="26" height="24" viewBox="0 0 26 24"><path d="M0 1h18v15H0z" fill="#808080"/><path d="M7.500 8.500h17v14h-17z" fill="none" stroke="#ccc"/><path d="M8 9h10v7H8z" fill="#888"/></svg></button>
    <button class="fbtn" aria-label="Remove size"><svg width="18" height="16" viewBox="0 0 18 16" fill="none" stroke="#aaa" stroke-width="2"><path d="M7 3h10M12.500 3v12M1 7h6M4 7v7"/></svg></button>
    <button class="fbtn" aria-label="Smaller"><svg width="18" height="16" viewBox="0 0 18 16"><path d="M1 4h10M6 4v10" stroke="#333" stroke-width="2.300"/><path d="M11 10h6l-3 4z" fill="#333"/></svg></button>
    <button class="fbtn" aria-label="Larger"><svg width="18" height="16" viewBox="0 0 18 16"><path d="M1 2h11M6.500 2v12" stroke="#333" stroke-width="2.300"/><path d="M11 8h6l-3-4z" fill="#333"/></svg></button>
    <i class="bar-sep bar-sep--format"></i>
    <button class="fbtn" aria-label="Bold"><svg width="14" height="16" viewBox="0 0 14 16"><path d="M3 2.500h5q3 .3 3 2.700T8 8H3.500M3 13.500h5.500q3.500-.3 3.500-2.800T8.500 8M3.500 2v12" fill="none" stroke="#333" stroke-width="2.800"/></svg></button>
    <button class="fbtn" aria-label="Italic"><svg width="14" height="16" viewBox="0 0 14 16"><path d="M5 2h7M2 14h7M9 2L5 14" fill="none" stroke="#333" stroke-width="2"/></svg></button>
    <button class="fbtn" aria-label="Underline"><svg width="14" height="16" viewBox="0 0 14 16"><path d="M3.500 1v6q0 4 3.500 4t3.500-4V1M1 14.500h12M1.500 1.500h3.500M9 1.500h3.500" fill="none" stroke="#333" stroke-width="1.700"/></svg></button>
    <i class="bar-sep bar-sep--format"></i>
    <button class="fbtn" aria-label="Clear formatting"><svg width="16" height="16" viewBox="0 0 16 16" fill="none" stroke="#333" stroke-width="1.300"><path d="M1 13L5 2h1l3 5M2.500 9h4"/><path d="M6 10l4-3 5 4-4 4zM8.500 13l4-4"/></svg></button>
    <i class="bar-sep bar-sep--format"></i>
    <button class="fbtn" aria-label="Bulleted list"><svg width="16" height="16" viewBox="0 0 16 16"><path d="M5 3h10M5 8h10M5 13h9M1 3h2M1 8h2M1 13h2" stroke="#333" stroke-width="2"/></svg></button>
    <button class="fbtn" aria-label="Numbered list"><svg width="16" height="16" viewBox="0 0 16 16"><path d="M6 4h9M6 12h9" stroke="#333" stroke-width="2"/><path d="M1 2.500L2.500 1v5M1 10q3-1.500 3 .5L1 14h4" fill="none" stroke="#333" stroke-width="1.200"/></svg></button>
    <button class="fbtn" aria-label="Outdent"><svg width="16" height="16" viewBox="0 0 16 16"><path d="M1 2h14M9 6h6M9 10h6M1 14h14M3 8h6" stroke="#333" stroke-width="2"/><path d="M6 4v8L1 8z" fill="#333"/></svg></button>
    <button class="fbtn" aria-label="Indent"><svg width="16" height="16" viewBox="0 0 16 16"><path d="M1 2h14M9 6h6M9 10h6M1 14h14M1 8h4" stroke="#333" stroke-width="2"/><path d="M3 4v8l5-4z" fill="#333"/></svg></button>
    <i class="bar-sep bar-sep--format"></i>
    <button class="fdrop" aria-label="Align"><svg width="16" height="16" viewBox="0 0 16 16"><path d="M1 2h13M1 6h14M1 10h12M1 14h14" stroke="#aaa" stroke-width="2"/></svg><svg width="9" height="7" viewBox="0 0 9 7"><path d="M1 1.500l3.500 3.500L8 1.500" fill="none" stroke="#999" stroke-width="2"/></svg></button>
    <button class="fdrop" aria-label="Insert"><svg width="16" height="16" viewBox="0 0 16 16" fill="none" stroke="#aaa" stroke-width="1.500"><rect x="1" y="2" width="14" height="12" rx="1.500"/><path d="M3 11l3-3 3 2 2-2 3 3"/><circle cx="11.500" cy="5.500" r=".5"/></svg><svg width="9" height="7" viewBox="0 0 9 7"><path d="M1 1.500l3.500 3.500L8 1.500" fill="none" stroke="#999" stroke-width="2"/></svg></button>
    <button class="fdrop" aria-label="Smiley"><svg width="16" height="16" viewBox="0 0 16 16" fill="none" stroke="#aaa" stroke-width="1.400"><circle cx="8" cy="8" r="7.200"/><path d="M4.500 9q3.500 4 7 0M5.500 5v1.500M10.500 5v1.500"/></svg><svg width="9" height="7" viewBox="0 0 9 7"><path d="M1 1.500l3.500 3.500L8 1.500" fill="none" stroke="#999" stroke-width="2"/></svg></button>
  </div>
  <div class="message" role="textbox" aria-label="Message body">
    <p>Hello, Everyone,</p>
    <p class="indented">This is a kind reminder of payment of <span class="misspelt">new-cemester</span> tuition. Up to sending this e-mail, we haven't received your tuition. Please finish your payment as soon as possible before the deadline.</p>
    <p>Regards,</p>
    <p><span class="misspelt">Anonym</span></p>
  </div>
  <footer class="compose-status"></footer>
  <svg class="pointer" width="20" height="26" viewBox="0 0 20 26"><path d="M3 2v18l4.500-4 3 7 3.500-1.500-3-6.500h6z" fill="#333" stroke="#fff" stroke-width="1.500"/></svg>
</section>
</main>
<script src="sheet.js"></script>
</body>
</html>
```
FILE: sheet.js
```js
// Builds the spreadsheet grid: column widths, letter headings and numbered rows.
const widths = [41, 64, 204, 75].concat(Array(15).fill(95));
const letters = 'ABCDEFGHIJKLMNOPQR'.split('');
const names = ['N', 'A', 'B', 'C', 'D', 'E', 'F', 'G', 'H', 'Ir', 'J', 'K', 'L', 'M', 'N',
  'O', 'P', 'Q', 'R', 'S', 'T', 'U', 'V', 'W', 'X', 'Y', 'Z'];

document.getElementById('cols').innerHTML =
  widths.map(w => `<col style="width:${w}px">`).join('');
document.getElementById('head').innerHTML =
  '<th></th>' + letters.map(l => `<th scope="col">${l}</th>`).join('');
let html = '';
for (let r = 1; r <= 43; r++) {
  html += `<tr><th scope="row">${r <= 42 ? r : ''}</th><td>${names[r - 1] || ''}</td>` +
    '<td></td>'.repeat(letters.length - 1) + '</tr>';
}
document.getElementById('rows').innerHTML = html;
```
FILE: styles.css
```css
* { box-sizing: border-box; }
body, h1, h2, p { margin: 0; }
button, input, select { font: inherit; color: inherit; }
button { background: none; border: 0; padding: 0; display: flex; align-items: center; justify-content: center; white-space: nowrap; }
svg { display: block; flex: none; }
u { text-decoration: underline; text-underline-offset: 3px; text-decoration-thickness: 1px; }

.desktop { height: 100vh; display: flex; flex-direction: column; overflow: hidden; background: #1b0f16; color: #3d3d3d; font: 15px/20px "Ubuntu", "Open Sans", "Noto Sans CJK TC", sans-serif; }

.topbar { flex: none; height: 27px; background: #131313; color: #ededed; display: grid; grid-template-columns: 1fr auto 1fr; align-items: center; }
.topbar-left { display: flex; padding-left: 18px; gap: 36px; }
.topbar-app { gap: 5px; }
.topbar-clock { gap: 17px; margin-left: 104px; }
.topbar-right { display: flex; justify-content: flex-end; align-items: center; gap: 13px; padding-right: 18px; }

.screen { flex: 1; min-height: 0; display: flex; position: relative; }

.dock { flex: none; width: 70px; padding: 6px 3px; display: flex; flex-direction: column; background: linear-gradient(#190d14, #1b1017 60%, #25141f); }
.dock-item { position: relative; flex: none; width: 64px; height: 64px; margin-bottom: 4px; border-radius: 10px; }
.is-active { background: #443a41; }
.is-running::before { content: ""; position: absolute; left: 0; top: 29px; width: 6px; height: 6px; border-radius: 50%; background: #e95420; }
.dock-separator { flex: none; height: 1px; margin: -1px 8px 3px; background: #c9c5c7; }
.dock-apps { margin-top: auto; margin-bottom: 0; }

.calc { flex: 1; min-width: 0; display: flex; flex-direction: column; background: #fafafa; color: #666; }
.calc-title { flex: none; height: 37px; border-bottom: 1px solid #d0d0d0; display: grid; grid-template-columns: 1fr auto 1fr; align-items: center; }
.calc-title-text { grid-column: 2; font-size: 15px; line-height: 20px; font-weight: 700; color: #5e5e5e; }
.calc-controls { display: flex; justify-content: flex-end; gap: 24px; padding-right: 13px; }
.calc-menu { flex: none; height: 25px; display: flex; padding-right: 11px; }
.calc-menu-list { flex: 1; display: flex; gap: 16px; padding: 1px 0 0 8px; margin-right: 8px; border-bottom: 1px solid #dedede; }

.toolbar { flex: none; display: flex; align-items: center; }
.toolbar-standard { height: 38px; }
.toolbar-format { height: 40px; }
.tool-lead { flex: none; width: 914px; display: flex; align-items: center; padding-left: 2px; }
.tool-lead--font { width: 916px; padding-left: 4px; }
.font-name { width: 260px; height: 34px; border: 1px solid #d0d0d0; border-radius: 6px; background: #fafafa; padding: 0 9px; font-style: italic; }
.tool { flex: none; width: 33px; height: 33px; }
.drop { flex: none; width: 13px; height: 33px; }
.drop::before { content: ""; border: 3px solid transparent; border-top: 4px solid #111; border-bottom: 0; }
.drop--tight { width: 11px; }
.tool-sep { flex: none; width: 1px; height: 33px; margin: 0 3px; background: #dcdcdc; }
.tool-sep--wide { margin: 0 4px; }

.work { flex: 1; min-height: 0; display: flex; }
.work-main { flex: 1; min-width: 0; display: flex; flex-direction: column; }
.formula { flex: none; height: 39px; display: flex; align-items: center; padding-left: 4px; border-bottom: 1px solid #d0d0d0; }
.name-box { width: 180px; height: 34px; border: 1px solid #d0d0d0; border-radius: 6px; background: #fafafa; padding: 0 8px; }
.formula-input { flex: 1; height: 25px; margin-left: 110px; border: 1px solid #c8c8c8; background: #fff; }
.formula-expand { width: 23px; height: 25px; padding-right: 3px; }
.infobar { flex: none; height: 40px; display: flex; align-items: center; padding: 0 4px; background: #bce5f8; border-bottom: 1px solid #c8cdd0; border-right: 1px solid #c8cdd0; }
.infobar-text { flex: 1; padding-left: 7px; color: #222; }
.infobar-button { height: 34px; padding: 0 15px; background: #fafafa; border: 1px solid #d4d4d4; border-radius: 6px; }
.infobar-close { width: 18px; margin-left: 6px; }

.sheet-area { flex: 1; min-height: 0; display: flex; }
.sheet-view { flex: 1; min-width: 0; overflow: hidden; background: #fff; }
.sheet { table-layout: fixed; width: 1809px; border-collapse: separate; border-spacing: 0; line-height: 15px; }
.sheet th, .sheet td { height: 17px; padding: 1px 0 0; border-right: 1px solid #c0c0c0; border-bottom: 1px solid #c0c0c0; white-space: nowrap; overflow: hidden; }
.sheet th { background: #fafafa; border-color: #969696; font-weight: 400; color: #444; text-align: center; }
.sheet thead th { height: 20px; padding: 0 0 0 1px; }
.sheet td { font-family: "Liberation Sans", sans-serif; font-size: 13px; color: #000; padding: 0 0 0 1px; }
.sheet tbody tr:first-child td { font-weight: 700; }
.vscroll { flex: none; width: 12px; }
.vsplit { height: 5px; background: linear-gradient(#111, #111) center / 6px 1px no-repeat #bbb; }
.vthumb { width: 6px; height: 48%; margin: 5px 3px 0; border-radius: 3px; background: #888; }
.hscroll { flex: none; height: 12px; display: flex; padding: 0 12px 0 4px; justify-content: space-between; }
.hthumb { width: 46.8%; height: 6px; margin-top: 3px; border-radius: 3px; background: #888; }
.hsplit { width: 5px; background: linear-gradient(#111, #111) center / 1px 6px no-repeat #bbb; }
.tabs { flex: none; height: 25px; display: flex; align-items: center; padding-left: 9px; gap: 8px; }
.tab-add { margin-left: 6px; }
.tab-nav { width: 17px; }
.sheet-tab { height: 25px; margin-left: 2px; padding: 1px 13px 0; background: #fff; border-bottom: 3px solid #999; color: #333; font-size: 12px; font-weight: 700; }

.sidebar { flex: none; width: 59px; border-left: 1px solid #b8b8b8; display: flex; flex-direction: column; align-items: center; padding-top: 3px; position: relative; }
.side-handle { position: absolute; left: -1px; top: 409px; width: 8px; height: 73px; background: #999; }
.side-item { flex: none; width: 36px; height: 34px; margin: 0 0 8px 2px; }
.side-menu { margin-bottom: 10px; }
.side-item--on { background: #e6e6e6; border: 1px solid #d0d0d0; border-radius: 6px; }

.status { flex: none; height: 21px; border-top: 1px solid #b8b8b8; display: grid; grid-template-columns: 260fr 346fr 303fr 301fr 67px 29px 29px 29px 294fr 143px 49px; align-items: center; font-size: 12px; line-height: 15px; color: #3d3d3d; }
.status > * { border-right: 1px solid #dcdcdc; height: 15px; padding-left: 9px; white-space: nowrap; }
.status > :last-child { border-right: 0; }
.status > .status-mid { padding: 0; text-align: center; }
.status > .status-icon { padding: 0; display: flex; justify-content: center; align-items: center; }
.status > .zoom-control { display: flex; align-items: center; gap: 6px; padding: 0 6px 0 10px; }
.zoom-range { appearance: none; flex: 1; min-width: 0; height: 10px; margin: 0; background: linear-gradient(#999, #999) center / 100% 2px no-repeat; }
.zoom-range::-webkit-slider-thumb { appearance: none; width: 8px; height: 8px; border: 1px solid #444; border-radius: 50%; background: #fff; }

.compose { position: absolute; left: 120px; top: 50px; width: 860px; height: 837px; display: flex; flex-direction: column; background: #fafafa; border-radius: 12px 12px 0 0; box-shadow: 0 0 0 1px rgba(0, 0, 0, .3), 0 4px 18px 2px rgba(0, 0, 0, .4); }
.compose-title { flex: none; height: 37px; background: #ebebeb; border-bottom: 1px solid #c4c4c4; border-top: 1px solid #f8f8f8; border-radius: 12px 12px 0 0; display: grid; grid-template-columns: 1fr auto 1fr; align-items: center; }
.compose-title-text { grid-column: 2; font-size: 15px; line-height: 20px; font-weight: 700; }
.compose-controls { display: flex; justify-content: flex-end; gap: 12px; padding-right: 7px; }
.compose-controls button { width: 22px; height: 22px; border-radius: 50%; background: #dadada; }
.compose-menu { flex: none; height: 28px; display: flex; align-items: center; gap: 14px; padding-left: 6px; }
.compose-tools { flex: none; height: 36px; display: flex; align-items: center; padding: 0 10px 0 11px; border-bottom: 1px solid #d4d4d4; box-shadow: 0 1px 2px rgba(0, 0, 0, .06); }
.ctool { gap: 3px; height: 24px; }
.ctool-encrypt { margin-left: 10px; color: #b4b4b4; }
.ctool-spell { margin-left: 16px; gap: 1px; }
.ctool-save { margin-left: 16px; gap: 6px; }
.ctool-contacts { margin-left: 15px; gap: 5px; }
.ctool-attach { gap: 5px; }
.bar-sep { flex: none; width: 1px; height: 24px; margin: 0 0 0 7px; background: #d0d0d0; }
.bar-sep--short { height: 18px; margin: 0 0 0 5px; }
.bar-sep--tiny { height: 14px; margin: 0 17px 0 14px; background: #bbb; }
.bar-sep--format { height: 18px; margin: 0 1px; }
.chev { width: 12px; height: 20px; margin-left: 5px; }
.grow { flex: 1; }

.headers { flex: none; padding: 8px 8px 0 0; display: flex; flex-direction: column; gap: 6px; }
.to-row, .subject-row { display: grid; grid-template-columns: 139px 1fr; column-gap: 10px; }
.from-row { display: flex; align-items: center; height: 30px; }
.field-label { text-align: right; width: 139px; }
.from-value { margin-left: 20px; color: #1c1c1c; }
.from-value em { margin: 0 6px 0 7px; color: #888; }
.bcc { margin-left: 19px; }
.more { margin-left: 20px; }
.to-field { min-height: 57px; padding: 3px 4px 2px; display: flex; flex-wrap: wrap; align-content: flex-start; gap: 4px 2px; background: #fff; border: 1px solid #bbb; border-radius: 3px; }
.to-row .field-label { padding-top: 6px; }
.pill { position: relative; height: 23px; line-height: 22px; padding: 0 7px 0 5px; border-radius: 3px; background: #e4e4e4; }
.pill::after { content: ""; position: absolute; right: 1px; top: 0; width: 4px; height: 4px; border-radius: 50%; background: #333; box-shadow: 0 0 0 2px #fff; }
.pill--on { background: #1161bd; color: #fff; box-shadow: inset 0 0 0 1px #0a4d9c, 0 0 3px #f4b8a8; }
.pill--on::after { background: #1161bd; }
.to-input { flex: 1; width: 20px; min-width: 0; height: 23px; border: 0; padding: 0; background: none; }
.subject-row { align-items: center; }
.subject-input { height: 30px; width: 100%; padding: 0 4px; background: #fff; border: 1px solid #bbb; border-radius: 3px; color: #111; }

.format { flex: none; height: 39px; padding: 4px 5px 0; display: flex; align-items: center; border-bottom: 1px solid #d0d0d0; }
.pick { display: grid; align-items: center; height: 24px; margin-right: 4px; }
.pick--style { width: 103px; }
.pick--font { width: 129px; }
.pick select { grid-area: 1 / 1; width: 100%; height: 24px; appearance: none; background: #fafafa; border: 1px solid #cfcfcf; border-radius: 3px; padding: 0 0 0 9px; color: #777; }
.pick svg { grid-area: 1 / 1; justify-self: end; margin-right: 4px; pointer-events: none; }
.swatch { margin: 0 4px; }
.fbtn { flex: none; width: 26px; height: 24px; }
.fdrop { flex: none; width: 37px; height: 24px; gap: 3px; }

.message { flex: 1; min-height: 0; background: #fff; padding: 8px; color: #000; font: 16px/19px "DejaVu Sans", sans-serif; }
.message p + p { margin-top: 16px; }
.indented { text-indent: 41px; }
.misspelt { text-decoration: underline wavy #f00 1px; text-underline-offset: 1px; text-decoration-skip-ink: none; }
.compose-status { flex: none; height: 23px; border-top: 1px solid #d0d0d0; }
.pointer { position: absolute; left: 502px; top: 159px; }
```
